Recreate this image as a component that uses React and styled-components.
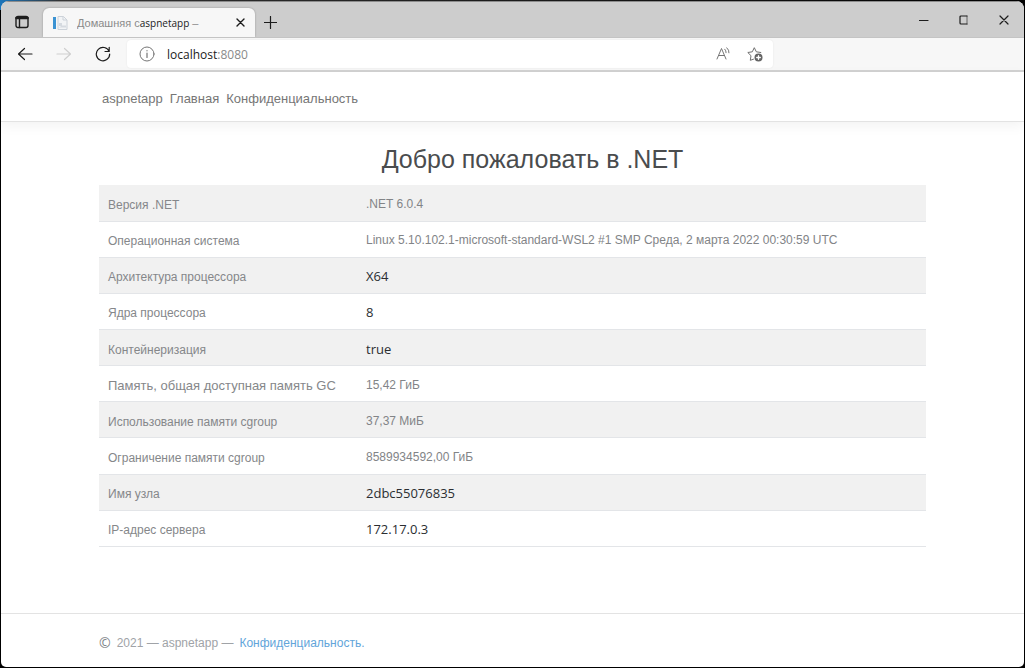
import React from 'react'
import styled, { createGlobalStyle } from 'styled-components'

const GlobalStyle = createGlobalStyle`
* {
  box-sizing: border-box;
}
body {
  margin: 0;
  background: #000;
  font-family: "Liberation Sans", Arial, sans-serif;
  font-size: 13px;
}
button {
  border: 0;
  padding: 0;
  background: transparent;
  font: inherit;
}
`

const Desktop = styled.div`
min-height: 100vh;
padding: 1px;
display: flex;
background: linear-gradient(90deg, #1b75bb 0, #333 60px, #000 100%);
background-size: 100% 10px;
background-repeat: no-repeat;
`
const Window = styled.div`
flex: 1;
min-width: 0;
display: flex;
flex-direction: column;
overflow: hidden;
border-radius: 8px 8px 5px 5px;
background: #fff;
`
const TitleBar = styled.div`
display: flex;
align-items: flex-end;
height: 36px;
background: #cdcdcd;
border-top: 1px solid #8c8c8c;
`
const IconButton = styled.button`
display: flex;
align-items: center;
justify-content: center;
flex: none;
width: ${p => p.$width || 40}px;
height: ${p => p.$height || 30}px;
color: ${p => p.$color || '#1c1c1c'};
`
const Tab = styled.div`
display: flex;
align-items: center;
width: 212px;
height: 29px;
padding: 0 5px 0 10px;
border-radius: 6px 6px 0 0;
background: #f7f7f7;
box-shadow: 0 0 2px rgba(0, 0, 0, .3);
`
const TabTitle = styled.div`
flex: 1;
display: flex;
align-items: baseline;
margin-left: 9px;
white-space: nowrap;
overflow: hidden;
font-size: 11px;
color: #8a8a8a;
`
const TabName = styled.span`
font-family: "Open Sans", sans-serif;
font-size: 10px;
color: #222;
`
const Spacer = styled.div`
flex: 1;
`
const Toolbar = styled.div`
display: flex;
align-items: center;
height: 35px;
padding: 0 4px;
background: #f7f7f7;
border-top: 1px solid #c4c4c4;
border-bottom: 2px solid #d2d2d2;
`
const AddressBar = styled.div`
display: flex;
align-items: center;
width: 646px;
height: 28px;
margin-left: 4px;
padding: 0 2px 0 12px;
border-radius: 4px;
background: #fff;
box-shadow: 0 0 2px rgba(0, 0, 0, .08);
`
const Address = styled.div`
flex: 1;
margin-left: 12px;
font-family: "Open Sans", sans-serif;
font-size: 12px;
color: #8a8a8a;
`
const Host = styled.span`
color: #1c1c1c;
`
const Nav = styled.nav`
display: flex;
align-items: center;
gap: 7px;
height: 50px;
padding: 4px 101px 0;
border-bottom: 1px solid #e3e3e3;
box-shadow: 0 4px 12px rgba(0, 0, 0, .05);
`
const NavLink = styled.a`
color: #767676;
text-decoration: none;
`
const Main = styled.main`
flex: 1;
padding: 0 98px 48px;
`
const Title = styled.h1`
margin: 22px 0 11px;
padding-left: 40px;
font-size: 25px;
font-weight: 400;
line-height: 30px;
text-align: center;
color: #4a4c4e;
`
const Table = styled.table`
width: 100%;
height: 362px;
border-collapse: collapse;
table-layout: fixed;
`
const Row = styled.tr`
height: 36px;
line-height: 18px;
border-bottom: 1px solid #e3e5e8;
&:nth-child(odd) {
  background: #f1f1f1;
}
`
const Label = styled.th`
width: 258px;
padding: 4px 0 0 9px;
text-align: left;
font-size: ${p => p.$large ? 13 : 12}px;
font-weight: 400;
color: #85878a;
`
const Value = styled.td`
padding: 2px 0 0 9px;
font-family: ${p => p.$strong ? '"Open Sans", sans-serif' : 'inherit'};
font-size: ${p => p.$strong ? 13 : 12}px;
color: ${p => p.$strong ? '#2b2e31' : '#828487'};
`
const Footer = styled.footer`
display: flex;
align-items: center;
gap: 6px;
height: 54px;
padding: 5px 98px 0;
border-top: 1px solid #e3e3e3;
font-size: 12px;
color: #a0a3a7;
`
const Copyright = styled.span`
font-family: "Open Sans", sans-serif;
font-size: 14px;
line-height: 18px;
color: #7d8287;
`
const FooterLink = styled.a`
color: #62a5da;
text-decoration: none;
`

const rows = [
  { label: 'Версия .NET', value: '.NET 6.0.4' },
  { label: 'Операционная система', value: 'Linux 5.10.102.1-microsoft-standard-WSL2 #1 SMP Среда, 2 марта 2022 00:30:59 UTC' },
  { label: 'Архитектура процессора', value: 'X64', strong: true },
  { label: 'Ядра процессора', value: '8', strong: true },
  { label: 'Контейнеризация', value: 'true', strong: true },
  { label: 'Память, общая доступная память GC', value: '15,42 ГиБ', large: true },
  { label: 'Использование памяти cgroup', value: '37,37 МиБ' },
  { label: 'Ограничение памяти cgroup', value: '8589934592,00 ГиБ' },
  { label: 'Имя узла', value: '2dbc55076835', strong: true },
  { label: 'IP-адрес сервера', value: '172.17.0.3', strong: true }
]

const Icon = ({ size = 16, width = 1.2, children }) => (
  <svg width={size} height={size} viewBox={`0 0 ${size} ${size}`} fill="none" stroke="currentColor" strokeWidth={width} strokeLinecap="round" strokeLinejoin="round" aria-hidden="true">
    {children}
  </svg>
)

const PageIcon = () => (
  <svg width="15" height="14" viewBox="0 0 15 14" aria-hidden="true">
    <path d="M5 .5h5.500l3.500 3.500v9.500H5z" fill="#f2f4f6" stroke="#ccd2d9" />
    <path d="M10 .5V4h4" fill="none" stroke="#ccd2d9" />
    <path d="M6 7h3v3H6zM9 9.500h4v2H6z" fill="#d5dae0" />
    <path d="M0 1h3v12H0z" fill="#3b93d3" />
  </svg>
)

const Browser = () => (
  <>
    <TitleBar>
      <IconButton aria-label="Вкладки" $width={42}>
        <Icon size={14} width={1.4}>
          <rect x="1" y="1.500" width="12" height="11" rx="2" />
          <path d="M1.500 3h11" strokeWidth="2.600" />
          <path d="M4.500 4v8.500" />
        </Icon>
      </IconButton>
      <Tab>
        <PageIcon />
        <TabTitle>Домашняя с<TabName>aspnetapp</TabName>&nbsp;–</TabTitle>
        <IconButton aria-label="Закрыть вкладку" $width={20}>
          <Icon size={9} width={1.4}><path d="M1 1l7 7M8 1L1 8" /></Icon>
        </IconButton>
      </Tab>
      <IconButton aria-label="Новая вкладка" $width={30}>
        <Icon size={13} width={1.2}><path d="M6.500.5v12M.5 6.500h12" /></Icon>
      </IconButton>
      <Spacer />
      <IconButton aria-label="Свернуть" $height={35}>
        <Icon size={10}><path d="M.5 5.500h8.500" /></Icon>
      </IconButton>
      <IconButton aria-label="Развернуть" $height={35}>
        <Icon size={10}><path d="M8 1H2Q1 1 1 2v6Q1 9 2 9h6" /><path d="M8 1v8" strokeWidth=".6" /></Icon>
      </IconButton>
      <IconButton aria-label="Закрыть" $height={35}>
        <Icon size={10}><path d="M1 1l8 8M9 1L1 9" /></Icon>
      </IconButton>
    </TitleBar>
    <Toolbar>
      <IconButton aria-label="Назад">
        <Icon><path d="M15 8H2M7.500 2.500L1.500 8l6 5.500" /></Icon>
      </IconButton>
      <IconButton aria-label="Вперёд" $width={38} $color="#cfcfcf">
        <Icon><path d="M1 8h13M8.500 2.500l6 5.500-6 5.500" /></Icon>
      </IconButton>
      <IconButton aria-label="Обновить">
        <Icon><path d="M14.200 5.500A6.700 6.700 0 1 0 14.700 8M14.200 1.300v4.200h-4.200" /></Icon>
      </IconButton>
      <AddressBar>
        <IconButton aria-label="Сведения о сайте" $width={16} $color="#757575">
          <Icon width={1}>
            <circle cx="8" cy="8" r="7" />
            <path d="M8 7v4.500M8 4.500v.3" strokeWidth="1.200" />
          </Icon>
        </IconButton>
        <Address><Host>localhost</Host>:8080</Address>
        <IconButton aria-label="Прочесть вслух" $width={32} $color="#757575">
          <Icon width={1}><path d="M2 13L6.500 2.500 11 13M3.500 9.500h6M9.800 3.200q1.500 1.500 1.300 3.500M11.800 1.800q2.500 2.200 2.200 5" /></Icon>
        </IconButton>
        <IconButton aria-label="Добавить в избранное" $width={32} $color="#707070">
          <Icon width={1}>
            <path d="M6.500 13.200L3.300 14.300 4 9.700.8 6.500l4.500-.7L7.300 1.700l2 4.100 4.500.7" />
            <circle cx="11.500" cy="11.500" r="4" fill="#666" stroke="none" />
            <path d="M9.700 11.500h3.600M11.500 9.700v3.600" stroke="#fff" strokeWidth="1.300" />
          </Icon>
        </IconButton>
      </AddressBar>
    </Toolbar>
  </>
)

export default () => (
  <Desktop>
    <GlobalStyle />
    <Window>
      <Browser />
      <Nav>
        <NavLink href="#">aspnetapp</NavLink>
        <NavLink href="#">Главная</NavLink>
        <NavLink href="#">Конфиденциальность</NavLink>
      </Nav>
      <Main>
        <Title>Добро пожаловать в .NET</Title>
        <Table>
          <tbody>
            {rows.map(row => (
              <Row key={row.label}>
                <Label scope="row" $large={row.large}>{row.label}</Label>
                <Value $strong={row.strong}>{row.value}</Value>
              </Row>
            ))}
          </tbody>
        </Table>
      </Main>
      <Footer>
        <Copyright>©</Copyright>
        <span>2021 — aspnetapp —</span>
        <FooterLink href="#">Конфиденциальность.</FooterLink>
      </Footer>
    </Window>
  </Desktop>
)
